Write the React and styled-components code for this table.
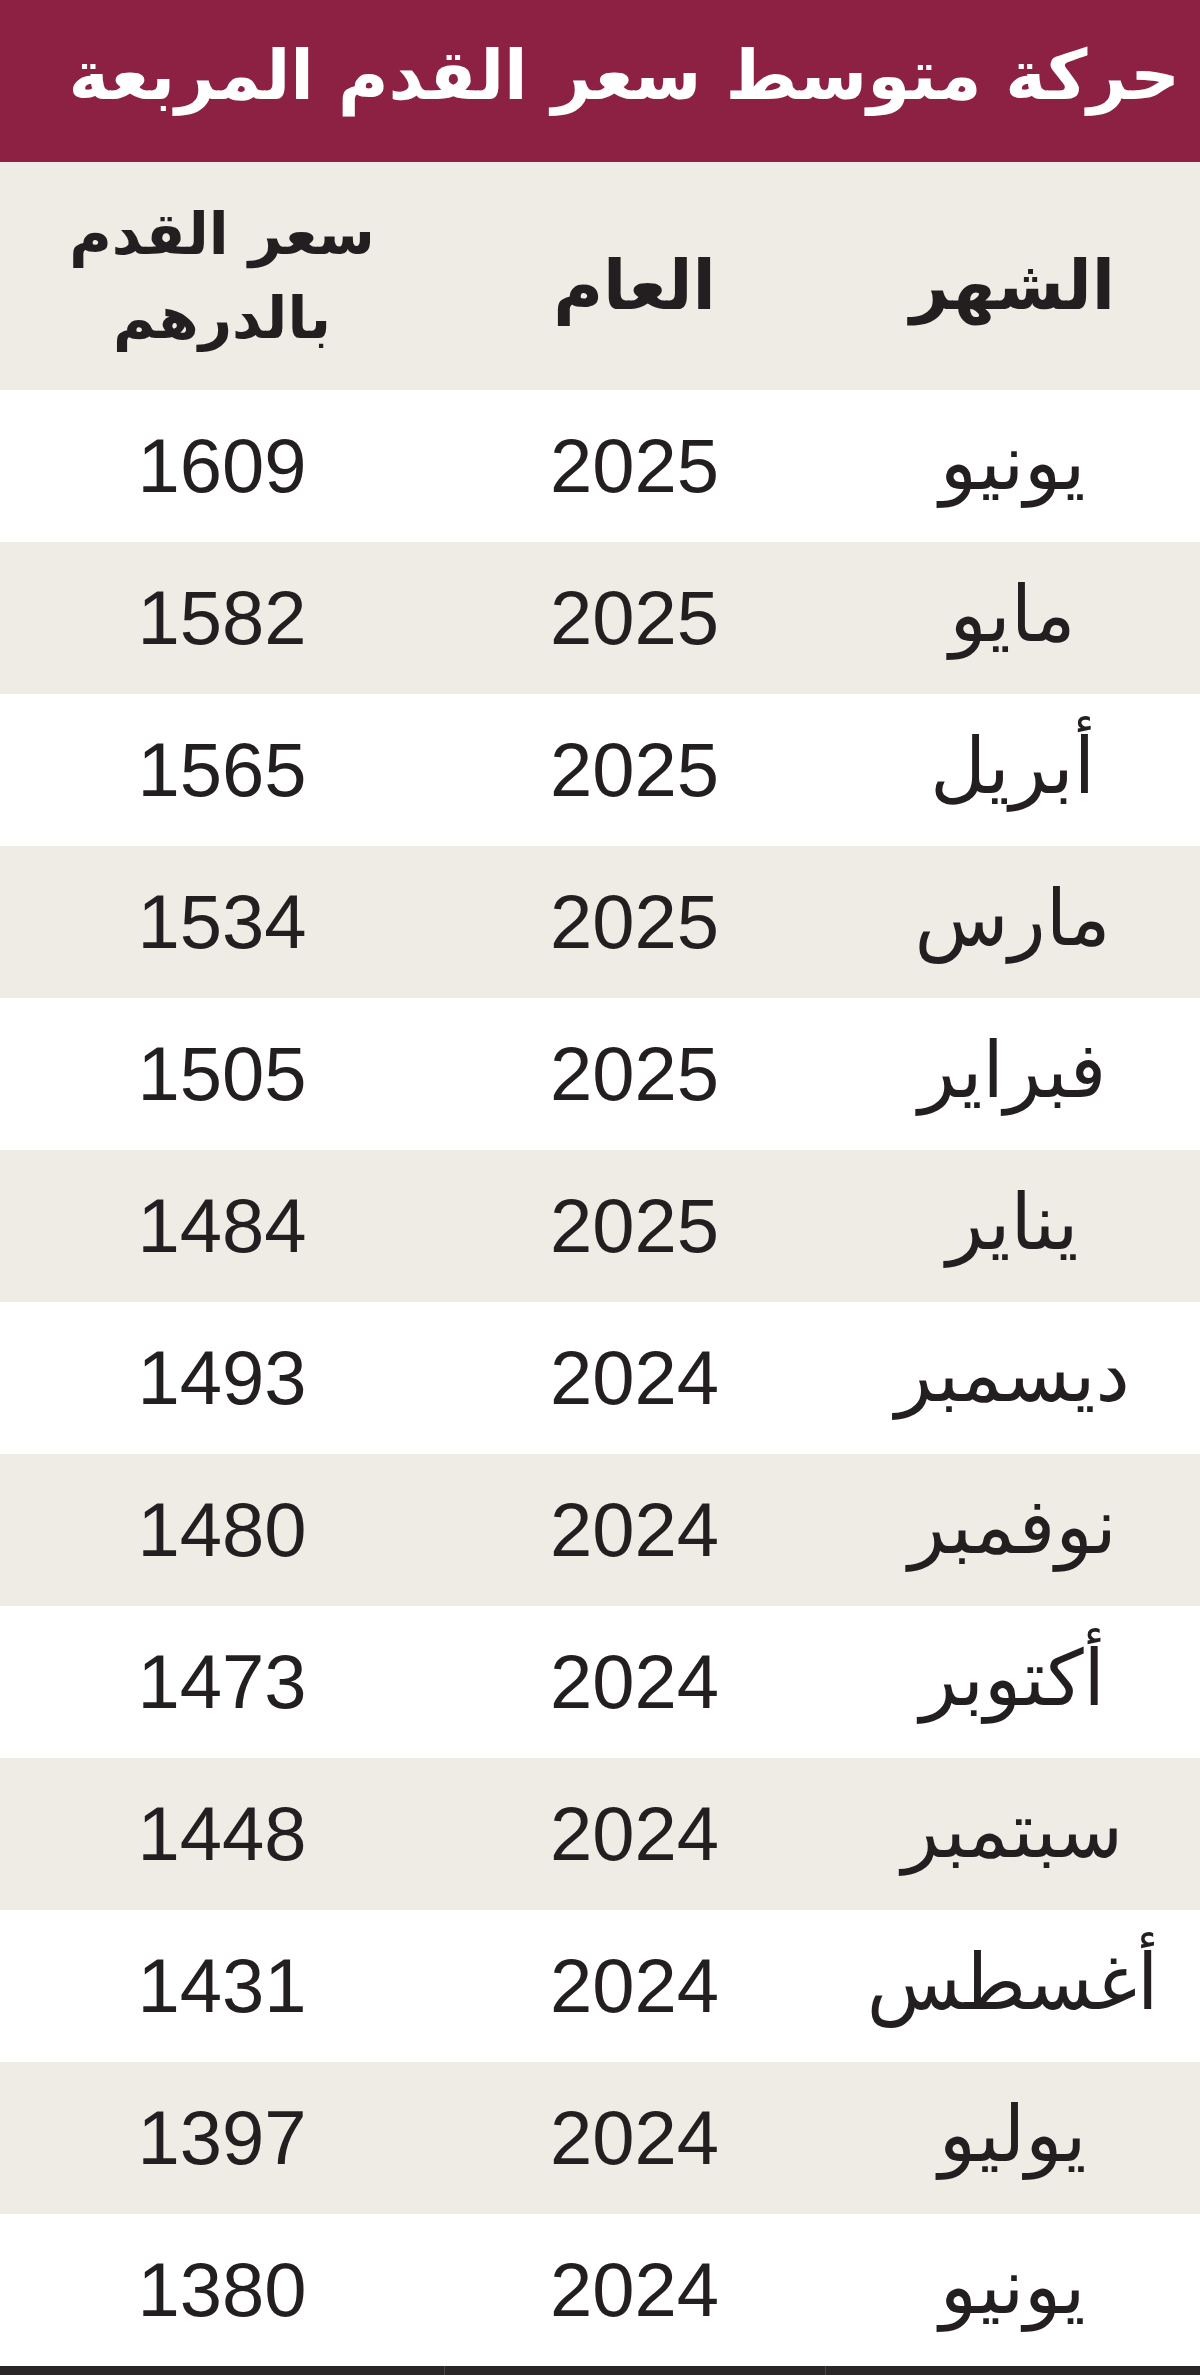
import React from 'react';
import styled, { createGlobalStyle } from 'styled-components';

const GlobalStyle = createGlobalStyle`
  html, body {
    margin: 0;
    padding: 0;
    background: #fff;
  }
`;

const rows = [
  { month: 'يونيو', year: '2025', price: '1609' },
  { month: 'مايو', year: '2025', price: '1582' },
  { month: 'أبريل', year: '2025', price: '1565' },
  { month: 'مارس', year: '2025', price: '1534' },
  { month: 'فبراير', year: '2025', price: '1505' },
  { month: 'يناير', year: '2025', price: '1484' },
  { month: 'ديسمبر', year: '2024', price: '1493' },
  { month: 'نوفمبر', year: '2024', price: '1480' },
  { month: 'أكتوبر', year: '2024', price: '1473' },
  { month: 'سبتمبر', year: '2024', price: '1448' },
  { month: 'أغسطس', year: '2024', price: '1431' },
  { month: 'يوليو', year: '2024', price: '1397' },
  { month: 'يونيو', year: '2024', price: '1380' },
];

const Page = styled.div`
  width: 1200px;
  direction: rtl;
  font-family: "DejaVu Sans", sans-serif;
  color: #231f20;
`;

const Banner = styled.header`
  height: 162px;
  background: #8c2143;
  display: flex;
  align-items: center;
  padding: 0 20px 12px;
  box-sizing: border-box;
`;

const Title = styled.h1`
  margin: 0;
  color: #fff;
  font-family: "DejaVu Sans", sans-serif;
  font-weight: 700;
  font-size: 69px;
  line-height: 1;
  white-space: nowrap;
`;

const Row = styled.div`
  display: grid;
  grid-template-columns: 375px 381px 444px;
  height: ${({ $head }) => ($head ? '228px' : '152px')};
  background: ${({ $shade }) => ($shade ? '#efebe5' : '#fff')};
`;

const Cell = styled.div`
  display: flex;
  align-items: center;
  justify-content: center;
  text-align: center;
`;

const HeadLabel = styled.span`
  font-weight: 700;
  font-size: ${({ $small }) => ($small ? '58px' : '68px')};
  line-height: ${({ $small }) => ($small ? '84px' : '1')};
  padding-top: ${({ $small }) => ($small ? '0' : '20px')};
`;

const MonthText = styled.span`
  font-size: 77px;
  line-height: 1;
  padding-bottom: 8px;
`;

const Number = styled.span`
  font-family: "Liberation Sans", Arial, sans-serif;
  font-size: 76px;
  line-height: 1;
  direction: ltr;
`;

const BottomRule = styled.div`
  height: 9px;
  background: #2a2627;
  display: grid;
  grid-template-columns: 375px 381px 444px;
`;

const RuleSegment = styled.div`
  border-left: ${({ $edge }) => ($edge ? '1px solid #4a4546' : 'none')};
`;

export default function App() {
  return (
    <>
      <GlobalStyle />
      <Page>
        <Banner>
          <Title>حركة متوسط سعر القدم المربعة</Title>
        </Banner>
        <Row $head $shade>
          <Cell>
            <HeadLabel>الشهر</HeadLabel>
          </Cell>
          <Cell>
            <HeadLabel>العام</HeadLabel>
          </Cell>
          <Cell>
            <HeadLabel $small>
              سعر القدم
              <br />
              بالدرهم
            </HeadLabel>
          </Cell>
        </Row>
        {rows.map((r, i) => (
          <Row key={i} $shade={i % 2 === 1}>
            <Cell>
              <MonthText>{r.month}</MonthText>
            </Cell>
            <Cell>
              <Number>{r.year}</Number>
            </Cell>
            <Cell>
              <Number>{r.price}</Number>
            </Cell>
          </Row>
        ))}
        <BottomRule>
          <RuleSegment $edge />
          <RuleSegment $edge />
          <RuleSegment />
        </BottomRule>
      </Page>
    </>
  );
}
